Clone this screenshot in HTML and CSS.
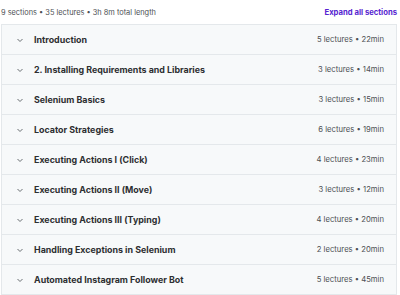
FILE: index.html
```html
<!DOCTYPE html>
<html lang="en">
<head>
    <meta charset="UTF-8">
    <meta name="viewport" content="width=device-width, initial-scale=1.0">
    <link rel="stylesheet" href="styles.css">
    <title>Course content</title>
</head>
<body>
    <div class="curriculum">
        <div class="summary">
            <span class="stats">9 sections • 35 lectures • 3h 8m total length</span>
            <button class="expand">Expand all sections</button>
        </div>

        <div class="sections">
            <div class="section">
                <span class="chevron"><svg width="8" height="8" viewBox="0 0 8 8"><path d="M1.5 3 L4 5.5 L6.5 3" fill="none" stroke="#6a6f73" stroke-width="1"/></svg></span>
                <span class="title">Introduction</span>
                <span class="meta">5 lectures • 22min</span>
            </div>
            <div class="section">
                <span class="chevron"><svg width="8" height="8" viewBox="0 0 8 8"><path d="M1.5 3 L4 5.5 L6.5 3" fill="none" stroke="#6a6f73" stroke-width="1"/></svg></span>
                <span class="title">2. Installing Requirements and Libraries</span>
                <span class="meta">3 lectures • 14min</span>
            </div>
            <div class="section">
                <span class="chevron"><svg width="8" height="8" viewBox="0 0 8 8"><path d="M1.5 3 L4 5.5 L6.5 3" fill="none" stroke="#6a6f73" stroke-width="1"/></svg></span>
                <span class="title">Selenium Basics</span>
                <span class="meta">3 lectures • 15min</span>
            </div>
            <div class="section">
                <span class="chevron"><svg width="8" height="8" viewBox="0 0 8 8"><path d="M1.5 3 L4 5.5 L6.5 3" fill="none" stroke="#6a6f73" stroke-width="1"/></svg></span>
                <span class="title">Locator Strategies</span>
                <span class="meta">6 lectures • 19min</span>
            </div>
            <div class="section">
                <span class="chevron"><svg width="8" height="8" viewBox="0 0 8 8"><path d="M1.5 3 L4 5.5 L6.5 3" fill="none" stroke="#6a6f73" stroke-width="1"/></svg></span>
                <span class="title">Executing Actions I (Click)</span>
                <span class="meta">4 lectures • 23min</span>
            </div>
            <div class="section">
                <span class="chevron"><svg width="8" height="8" viewBox="0 0 8 8"><path d="M1.5 3 L4 5.5 L6.5 3" fill="none" stroke="#6a6f73" stroke-width="1"/></svg></span>
                <span class="title">Executing Actions II (Move)</span>
                <span class="meta">3 lectures • 12min</span>
            </div>
            <div class="section">
                <span class="chevron"><svg width="8" height="8" viewBox="0 0 8 8"><path d="M1.5 3 L4 5.5 L6.5 3" fill="none" stroke="#6a6f73" stroke-width="1"/></svg></span>
                <span class="title">Executing Actions III (Typing)</span>
                <span class="meta">4 lectures • 20min</span>
            </div>
            <div class="section">
                <span class="chevron"><svg width="8" height="8" viewBox="0 0 8 8"><path d="M1.5 3 L4 5.5 L6.5 3" fill="none" stroke="#6a6f73" stroke-width="1"/></svg></span>
                <span class="title">Handling Exceptions in Selenium</span>
                <span class="meta">2 lectures • 20min</span>
            </div>
            <div class="section">
                <span class="chevron"><svg width="8" height="8" viewBox="0 0 8 8"><path d="M1.5 3 L4 5.5 L6.5 3" fill="none" stroke="#6a6f73" stroke-width="1"/></svg></span>
                <span class="title">Automated Instagram Follower Bot</span>
                <span class="meta">5 lectures • 45min</span>
            </div>
        </div>
    </div>
</body>
</html>
```

FILE: styles.css
```css
body {
    margin: 0;
    background-color: #ffffff;
    font-family: "Inter", "Liberation Sans", sans-serif;
    color: #2d2f31;
}

.curriculum {
    padding: 0 3px 0 1px;
}

.summary {
    display: flex;
    justify-content: space-between;
    align-items: center;
    height: 24px;
}

.stats {
    font-size: 7.4px;
    color: #4d5054;
}

.expand {
    border: none;
    background: none;
    padding: 0;
    font-family: inherit;
    font-size: 7.7px;
    font-weight: 700;
    color: #5624d0;
}

.sections {
    border: 1px solid #e4e8eb;
    border-bottom: none;
}

.section {
    display: flex;
    align-items: center;
    height: 29px;
    background-color: #f7f9fa;
    border-bottom: 1px solid #e4e8eb;
    padding: 0 12px 0 14px;
}

.chevron {
    display: flex;
    width: 8px;
    height: 8px;
    margin-right: 10px;
}

.title {
    flex: 1;
    font-size: 8.9px;
    font-weight: 700;
}

.meta {
    font-size: 7.7px;
    color: #4d5054;
}
```
